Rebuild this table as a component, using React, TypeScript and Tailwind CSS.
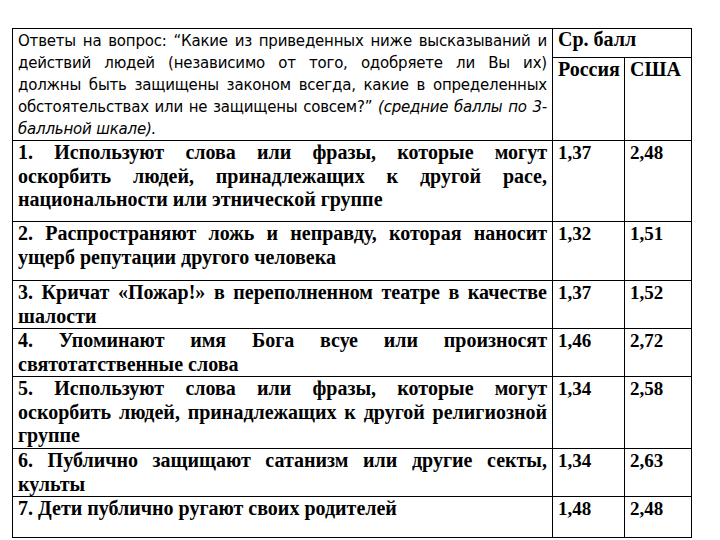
const rows = [
  {
    text: '1. Используют слова или фразы, которые могут оскорбить людей, принадлежащих к другой расе, национальности или этнической группе',
    ru: '1,37',
    us: '2,48',
    h: 'h-[81px]',
  },
  {
    text: '2. Распространяют ложь и неправду, которая наносит ущерб репутации другого человека',
    ru: '1,32',
    us: '1,51',
    h: 'h-[59px]',
  },
  {
    text: '3. Кричат «Пожар!» в переполненном театре в качестве шалости',
    ru: '1,37',
    us: '1,52',
    h: 'h-[48px]',
  },
  {
    text: '4. Упоминают имя Бога всуе или произносят святотатственные слова',
    ru: '1,46',
    us: '2,72',
    h: 'h-[48px]',
  },
  {
    text: '5. Используют слова или фразы, которые могут оскорбить людей, принадлежащих к другой религиозной группе',
    ru: '1,34',
    us: '2,58',
    h: 'h-[72px]',
  },
  {
    text: '6. Публично защищают сатанизм или другие секты, культы',
    ru: '1,34',
    us: '2,63',
    h: 'h-[48px]',
  },
  {
    text: '7. Дети публично ругают своих родителей',
    ru: '1,48',
    us: '2,48',
    h: 'h-[41px]',
  },
]

const serif = "font-['Liberation_Serif','Times_New_Roman',serif] font-bold"
const line = 'whitespace-nowrap text-justify [text-align-last:justify]'

export default function App() {
  return (
    <div className="w-[720px] h-[540px] bg-white pt-[28px] pl-[12px]">
      <table className="border-collapse table-fixed w-[679px] text-black">
        <colgroup>
          <col className="w-[540px]" />
          <col className="w-[72px]" />
          <col className="w-[67px]" />
        </colgroup>
        <tbody>
          <tr className="h-[28px]">
            <td
              rowSpan={2}
              className="border border-black align-top px-[5px] pt-[1px] font-['DejaVu_Sans','Verdana',sans-serif] text-[15px] leading-[22px] tracking-[-0.2px]"
            >
              <div className={line}>Ответы на вопрос: “Какие из приведенных ниже высказываний и</div>
              <div className={line}>действий людей (независимо от того, одобряете ли Вы их)</div>
              <div className={line}>должны быть защищены законом всегда, какие в определенных</div>
              <div className={line}>
                обстоятельствах или не защищены совсем?” <i>(средние баллы по 3-</i>
              </div>
              <div>
                <i>балльной шкале).</i>
              </div>
            </td>
            <td colSpan={2} className={`border border-black align-top px-[5px] pt-0 ${serif} text-[20px] leading-[20px]`}>
              Ср. балл
            </td>
          </tr>
          <tr className="h-[80px]">
            <td className={`border border-black align-top px-[5px] pt-0 ${serif} text-[20px] leading-[22px]`}>
              Россия
            </td>
            <td className={`border border-black align-top px-[5px] pt-0 ${serif} text-[20px] leading-[22px]`}>
              США
            </td>
          </tr>
          {rows.map(r => (
            <tr key={r.ru + r.text.slice(0, 3)} className={r.h}>
              <td className={`border border-black align-top px-[5px] pt-0 text-justify ${serif} text-[20px] leading-[23.5px]`}>
                {r.text}
              </td>
              <td className={`border border-black align-top px-[5px] pt-0 ${serif} text-[19px] leading-[23.5px]`}>
                {r.ru}
              </td>
              <td className={`border border-black align-top px-[5px] pt-0 ${serif} text-[19px] leading-[23.5px]`}>
                {r.us}
              </td>
            </tr>
          ))}
        </tbody>
      </table>
    </div>
  )
}
